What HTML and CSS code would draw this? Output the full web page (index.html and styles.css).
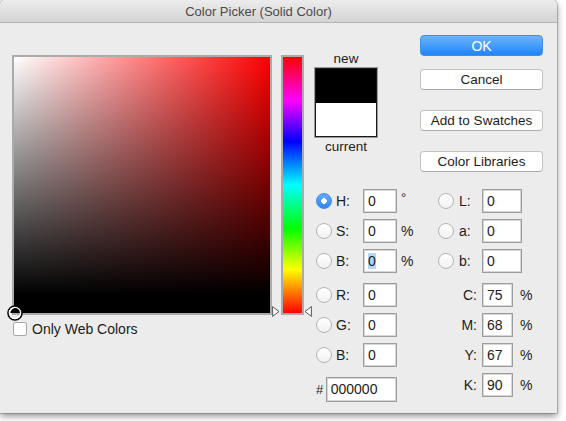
FILE: index.html
```html
<!DOCTYPE html>
<html>
<head>
<meta charset="utf-8">
<link rel="stylesheet" href="styles.css">
</head>
<body>
<div class="window">
  <div class="titlebar"><span class="title">Color Picker (Solid Color)</span></div>
  <div class="main">
    <div class="left">
      <div class="pickers">
        <div class="field">
          <svg class="marker" width="18" height="18" viewBox="0 0 18 18">
            <circle cx="9" cy="9" r="7" fill="none" stroke="#000" stroke-width="1.6"/>
            <circle cx="9" cy="9" r="5.6" fill="none" stroke="#fff" stroke-width="1.2"/>
            <path d="M9 4.4 A4.6 4.6 0 0 0 4.4 9 L9 9 Z" fill="#000"/>
          </svg>
        </div>
        <div class="hue-wrap">
          <div class="hue"></div>
          <svg class="tri tri-l" width="8" height="11" viewBox="0 0 8 11"><path d="M0.6 0.6 L7 5.5 L0.6 10.4 Z" fill="#fff" stroke="#555" stroke-width="1"/></svg>
          <svg class="tri tri-r" width="8" height="11" viewBox="0 0 8 11"><path d="M7.4 0.6 L1 5.5 L7.4 10.4 Z" fill="#fff" stroke="#555" stroke-width="1"/></svg>
        </div>
      </div>
      <div class="check-row"><span class="checkbox"></span><span>Only Web Colors</span></div>
    </div>
    <div class="right">
      <div class="top">
        <div class="swatch-col">
          <div class="sw-label">new</div>
          <div class="swatch"><div class="sw-new"></div><div class="sw-cur"></div></div>
          <div class="sw-label">current</div>
        </div>
        <div class="buttons">
          <div class="btn btn-ok">OK</div>
          <div class="btn btn-cancel">Cancel</div>
          <div class="btn btn-add">Add to Swatches</div>
          <div class="btn btn-lib">Color Libraries</div>
        </div>
      </div>
      <div class="grid hsb">
        <span class="radio on"></span><span class="lbl">H:</span><div class="box">0</div><span class="unit deg">°</span>
        <span class="radio"></span><span class="lbl">L:</span><div class="box wide">0</div>
        <span class="radio"></span><span class="lbl">S:</span><div class="box">0</div><span class="unit">%</span>
        <span class="radio"></span><span class="lbl">a:</span><div class="box wide">0</div>
        <span class="radio"></span><span class="lbl">B:</span><div class="box"><span class="sel">0</span></div><span class="unit">%</span>
        <span class="radio"></span><span class="lbl">b:</span><div class="box wide">0</div>
      </div>
      <div class="grid rgb">
        <span class="radio"></span><span class="lbl">R:</span><div class="box">0</div><span class="clbl">C:</span><div class="box narrow">75</div><span class="unit pct">%</span>
        <span class="radio"></span><span class="lbl">G:</span><div class="box">0</div><span class="clbl">M:</span><div class="box narrow">68</div><span class="unit pct">%</span>
        <span class="radio"></span><span class="lbl">B:</span><div class="box">0</div><span class="clbl">Y:</span><div class="box narrow">67</div><span class="unit pct">%</span>
        <div class="hash-row"><span class="hash">#</span><div class="box hex">000000</div></div><span class="clbl">K:</span><div class="box narrow">90</div><span class="unit pct">%</span>
      </div>
    </div>
  </div>
</div>
</body>
</html>
```
FILE: styles.css
```css
* { box-sizing: border-box; }
html, body { margin: 0; padding: 0; }
body {
  width: 566px;
  height: 421px;
  background: #ffffff;
  font-family: "Liberation Sans", Arial, sans-serif;
  font-size: 13.5px;
  color: #1c1c1c;
  overflow: hidden;
}
.window {
  width: 557px;
  height: 413px;
  background: #ececec;
  border-radius: 5px 5px 0 0;
  box-shadow: 0 3px 7px rgba(0,0,0,0.45), 0 0 0 1px rgba(0,0,0,0.18);
  overflow: hidden;
}
.titlebar {
  height: 23px;
  background: linear-gradient(#ececec, #d4d4d4);
  border-bottom: 1px solid #b4b4b4;
  display: flex;
  align-items: center;
  justify-content: center;
  padding-right: 40px;
}
.title {
  font-size: 13px;
  color: #4a4a4a;
}
.main {
  display: flex;
  padding: 12px 0 0 12px;
}
.left {
  width: 292px;
  margin-top: 20px;
}
.pickers {
  display: flex;
  gap: 9px;
}
.field {
  position: relative;
  width: 260px;
  height: 260px;
  border: 2px solid #ababab;
  background:
    linear-gradient(to bottom, rgba(0,0,0,0) 0%, #000 93%),
    linear-gradient(to right, #ffffff, #ff0000);
}
.marker {
  position: absolute;
  left: -8px;
  bottom: -9px;
}
.hue-wrap {
  position: relative;
  width: 23px;
  height: 260px;
}
.hue {
  width: 23px;
  height: 260px;
  border: 2px solid #ababab;
  background: linear-gradient(to bottom, #ff0000 0%, #ff00ff 17%, #0000ff 33%, #00ffff 50%, #00ff00 67%, #ffff00 83%, #ff0000 100%);
}
.tri {
  position: absolute;
  bottom: -2px;
}
.tri-l { left: -9px; }
.tri-r { right: -8px; }
.check-row {
  display: flex;
  align-items: center;
  gap: 5px;
  margin-top: 6px;
  margin-left: 1px;
  font-size: 14px;
}
.checkbox {
  width: 14px;
  height: 14px;
  background: #fff;
  border: 1px solid #a8a8a8;
  border-radius: 2px;
}
.right {
  margin-left: 11px;
  width: 235px;
}
.top {
  display: flex;
}
.swatch-col {
  width: 62px;
  padding-top: 16px;
  display: flex;
  flex-direction: column;
  align-items: center;
}
.sw-label {
  height: 16px;
  line-height: 16px;
  font-size: 13.5px;
  text-align: center;
}
.swatch {
  width: 62px;
  height: 69px;
  margin: 1px 0 2px;
  border: 1px solid #1a1a1a;
  box-shadow: 0 0 0 1px #9a9a9a;
  display: flex;
  flex-direction: column;
}
.sw-new { flex: 1; background: #000; }
.sw-cur { flex: 1; background: #fff; }
.buttons {
  margin-left: 43px;
  width: 123px;
  display: flex;
  flex-direction: column;
}
.btn {
  height: 21px;
  border-radius: 4px;
  background: #fff;
  border: 1px solid #c3c3c3;
  border-bottom-color: #aaa;
  display: flex;
  align-items: center;
  justify-content: center;
  font-size: 13.5px;
  color: #1c1c1c;
}
.btn-ok {
  background: linear-gradient(#6db4fb, #1f85fb);
  border: 1px solid #3d8fe6;
  color: #fff;
  font-size: 14px;
}
.btn-cancel { margin-top: 13px; }
.btn-add { margin-top: 20px; }
.btn-lib { margin-top: 20px; }
.grid {
  display: grid;
  row-gap: 6px;
  align-items: center;
  margin-left: 1px;
}
.hsb {
  margin-top: 17px;
  grid-template-columns: 18px 29px 34px 41px 19px 25px 40px;
  grid-auto-rows: 24px;
}
.rgb {
  margin-top: 10px;
  grid-template-columns: 18px 29px 34px 85px 31px 30px;
  grid-auto-rows: 24px;
}
.radio {
  width: 16px;
  height: 16px;
  border-radius: 50%;
  border: 1px solid #b4b4b4;
  background: linear-gradient(#ffffff, #f1f1f1);
}
.radio.on {
  border-color: #3a8ef0;
  background: radial-gradient(circle, #fff 0 2.6px, transparent 3px), linear-gradient(#65aaf9, #2f88f7);
}
.lbl {
  padding-left: 2px;
  font-size: 14px;
}
.box {
  height: 24px;
  background: #fff;
  border: 1px solid #9d9d9d;
  box-shadow: inset 0 0 0 1px #d6d6d6;
  padding-left: 4px;
  display: flex;
  align-items: center;
  font-size: 14px;
}
.box.wide { width: 40px; }
.box.narrow { width: 31px; }
.sel { background: #b4d6fd; }
.unit {
  padding-left: 4px;
  font-size: 14px;
}
.unit.deg {
  align-self: start;
  padding-top: 1px;
  font-size: 13px;
}
.unit.pct { padding-left: 7px; }
.clbl {
  text-align: right;
  padding-right: 5px;
  font-size: 14px;
}
.hash-row {
  grid-column: 1 / span 3;
  display: flex;
  align-items: center;
  margin-top: 8px;
}
.hash {
  width: 11px;
  font-size: 13px;
}
.box.hex { width: 80px; height: 25px; }
```
